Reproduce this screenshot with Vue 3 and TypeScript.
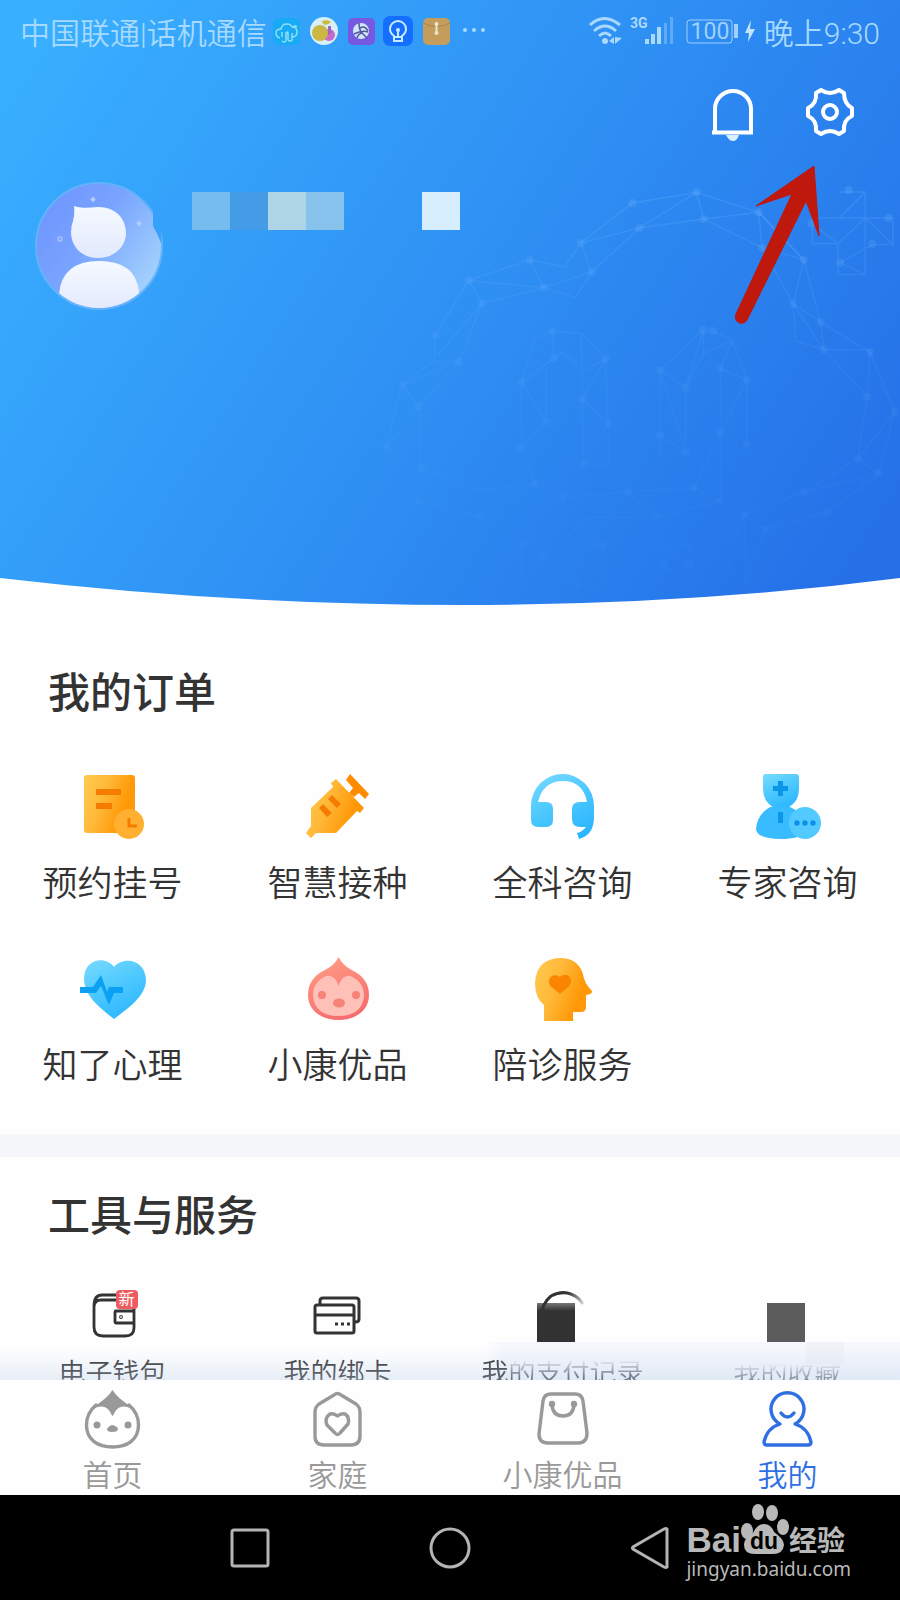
<script setup lang="ts">
interface Entry {
  id: string
  label: string
}

const orders: Entry[] = [
  { id: 'register', label: '预约挂号' },
  { id: 'vaccine', label: '智慧接种' },
  { id: 'general', label: '全科咨询' },
  { id: 'expert', label: '专家咨询' },
  { id: 'mind', label: '知了心理' },
  { id: 'goods', label: '小康优品' },
  { id: 'escort', label: '陪诊服务' },
]

const tools: Entry[] = [
  { id: 'wallet', label: '电子钱包' },
  { id: 'cards', label: '我的绑卡' },
  { id: 'payments', label: '我的支付记录' },
  { id: 'favorites', label: '我的收藏' },
]

const tabs: Entry[] = [
  { id: 'home', label: '首页' },
  { id: 'family', label: '家庭' },
  { id: 'shop', label: '小康优品' },
  { id: 'me', label: '我的' },
]

const activeTab = 'me'

type Point = [number, number]

const nodes: Point[] = [
  [776, 189], [966, 157], [987, 237], [797, 264], [624, 309], [1150, 217], [1160, 323], [656, 396],
  [473, 360], [514, 443], [292, 421], [331, 490], [192, 586], [263, 665], [95, 735], [144, 799],
  [48, 921], [1283, 359], [1252, 492], [1333, 546], [1343, 629], [1480, 637], [1471, 770], [1552, 815],
  [1443, 956], [1505, 1000], [1416, 150], [1534, 234], [1486, 311], [1391, 368], [1306, 250], [539, 573],
  [545, 655], [697, 656], [448, 728], [628, 778], [522, 845], [705, 850], [986, 570], [1015, 573],
  [858, 691], [1037, 685], [1115, 719], [934, 743], [858, 886], [1037, 880], [1115, 915], [934, 938],
  [631, 971], [446, 925], [152, 984], [488, 1032], [568, 1073], [762, 1056], [957, 1043], [848, 1132],
  [1033, 1084], [1284, 1056], [1106, 1124], [1170, 1167], [1354, 1116], [446, 1213], [511, 1249],
  [690, 1217], [870, 1276], [948, 1276], [610, 1332], [144, 1083], [328, 1132],
]
</script>

<template>
  <div class="phone">
    <header class="hero">
      <svg class="hero-bg" viewBox="0 0 900 606" preserveAspectRatio="none" aria-hidden="true">
        <defs>
          <linearGradient id="sky" gradientUnits="userSpaceOnUse" x1="0" y1="60" x2="850" y2="610">
            <stop offset="0" stop-color="#39b0ff" />
            <stop offset=".5" stop-color="#2f91f4" />
            <stop offset="1" stop-color="#256fe7" />
          </linearGradient>
          <linearGradient id="fade" gradientUnits="userSpaceOnUse" x1="0" y1="100" x2="0" y2="1350">
            <stop offset="0" stop-color="#6fb4ff" stop-opacity=".26" />
            <stop offset=".5" stop-color="#62a8ff" stop-opacity=".12" />
            <stop offset="1" stop-color="#62a8ff" stop-opacity=".04" />
          </linearGradient>
        </defs>
        <path fill="url(#sky)" d="M0 0H900V578Q690 605 465 605Q230 605 0 578Z" />
        <g transform="translate(370 140) scale(.338 .3333)" fill="url(#fade)">
          <g fill="none" stroke="url(#fade)" stroke-width="4">
            <path d="M292 421 473 360 576 381 624 309 776 189 966 157 1150 217 1283 359 1333 546 1480 637 1552 815 1505 1000 1354 1116 1170 1167 1106 1340" />
            <path d="M292 421 192 586 190 661 95 735 48 921M292 421 331 490 514 443 608 472 656 396 797 264 987 237 1160 323 1252 492 1343 629 1471 770 1443 956 1284 1056 1106 1124 1050 1305" />
            <path d="M292 421 514 443 473 360M514 443 656 396 624 309 797 264 966 157 987 237 1150 217 1160 323 1283 359 1252 492 1333 546 1343 629H1480L1471 770M1252 492 1260 603 1343 629M1150 217 1283 359M331 490 200 645M331 490 263 665H190M263 665 95 735 144 799 48 921M263 665 144 799 152 984M1552 815 1443 956 1505 1000 1284 1056M1106 1124 1170 1167M1106 1124 1115 1340" />
            <path d="M1390 156H1465V404H1385V311H1309V234H1547V314H1486L1391 368 1465 404M1465 156 1390 232M1465 234 1385 311 1320 260M1465 234 1547 314" />
            <path d="M448 925V728L487 599 539 573 625 580 697 656 705 850V977L631 971 625 580M539 573 545 655 448 728 522 845 446 925M522 845V680M545 655 570 638 635 690 697 656 628 778 705 850 631 971" />
            <path d="M986 570 858 691V960M1015 573 1073 603 1115 719V915M858 691 934 743 987 570V640L1073 603 1037 685 1115 719 1037 880 957 1043M858 691 934 938 858 886M934 938V743L987 640M1037 685V1084" />
            <path d="M152 984 328 1052 488 1032 446 925M144 1083 328 1132 488 1032M568 1073 762 1056 957 1043 1033 1084 848 1132 762 1056M848 1132H650L446 1213 511 1249 650 1132M446 1213V1340L511 1249V1340M610 1213H690V1340H610ZM870 1213H948V1276L870 1213V1276L948 1340" />
          </g>
          <circle v-for="(n, i) in nodes" :key="i" :cx="n[0]" :cy="n[1]" r="12" />
        </g>
      </svg>

      <div class="status">
        <span class="carrier">中国联通|话机通信</span>
        <svg class="apps" viewBox="0 0 218 32" aria-hidden="true">
          <rect x="1" y="3" width="27" height="27" rx="6" fill="#18aaf5" />
          <path d="M8 23q-4-1-4-5t5-4q1-5 6-5 4 0 5 3 5 0 5 5t-5 5M10 22v-5m4 9v-8q2-2 2 0v7m-6 1q2 2 4 0m2-1q2 2 4 0v-7m3-8v3m-2-1.500h4" fill="none" stroke="#8ee0f2" stroke-width="1.500" />
          <circle cx="52" cy="16" r="14" fill="#d8eff6" />
          <path d="M50 6q6-2 9 1-4 4-8 2z" fill="#c9bb3b" />
          <circle cx="57" cy="20" r="6" fill="#c86ac9" />
          <circle cx="48" cy="18" r="8" fill="#ccb743" />
          <path d="M56 20V11h3v7z" fill="#9a67c9" />
          <rect x="76" y="3" width="27" height="27" rx="5" fill="#7658e1" />
          <circle cx="89" cy="16" r="8" fill="#cfe8f7" />
          <path d="M87 8q0 7 3 10l5 5M82 19q8-4 14-2M90 18q-4 1-5 5M88 13q5-3 8 3" fill="none" stroke="#53569d" stroke-width="1.500" />
          <rect x="111" y="1" width="30" height="30" rx="7" fill="#146eff" />
          <path d="M122 21q-4-3-4-7a8 8 0 0 1 16 0q0 4-4 7v5h-8zm0 1h8m-4-1v-6" fill="none" stroke="#c8ecff" stroke-width="2" />
          <circle cx="126" cy="15" r="2" fill="#c8ecff" />
          <rect x="151" y="3" width="27" height="27" rx="5" fill="#c49c5c" />
          <path d="M151 8q13 7 27 0" fill="none" stroke="#a98650" />
          <path d="M164.500 9v9" stroke="#e9e5cd" stroke-width="2" />
          <circle cx="164.500" cy="9" r="2" fill="#e9e5cd" />
          <circle cx="164.500" cy="18" r="2" fill="#e9e5cd" />
          <circle v-for="x in [193, 202, 211]" :key="x" :cx="x" cy="15" r="2" fill="#a8dcff" />
        </svg>
        <span class="grow"></span>
        <svg class="signals" viewBox="0 0 170 32" aria-hidden="true">
          <g fill="none" stroke="#abd9fd" stroke-width="3">
            <path d="M2 10q14-13 30 0M6 16q11-10 22 0M11 21q6-6 12 0" />
          </g>
          <circle cx="17" cy="26" r="3" fill="#abd9fd" />
          <path d="M21 26l5-4v7zm6-4v7l7-6z" fill="#abd9fd" />
          <text x="42" y="13" class="net">3G</text>
          <path d="M57 24h4v5h-4zM63 19h4v10h-4zM69 12h4v17h-4z" fill="#abd9fd" />
          <path d="M76 8h3v21h-3zM82 2h3v27h-3z" fill="#5fabf7" />
          <rect x="99" y="5" width="45" height="23" rx="3" fill="none" stroke="#9fd0fb" />
          <path d="M146 9h4v14h-4z" fill="#9fd0fb" />
          <text x="122" y="24" class="level">100</text>
          <path d="M163 5l-6 13h4l-1 9 7-13h-5z" fill="#c3e4ff" />
        </svg>
        <span class="clock">晚上9:30</span>
      </div>

      <div class="actions">
        <button type="button" aria-label="消息">
          <svg viewBox="0 0 56 56" aria-hidden="true">
            <path d="M11 48V25a18 18 0 0 1 36 0v23M8 48.500h41" fill="none" stroke="#fff" stroke-width="4" />
            <path d="M22 51h13q-2 6-6 6t-7-6z" fill="#d9efff" />
          </svg>
        </button>
        <button type="button" aria-label="设置">
          <svg viewBox="0 0 56 56" aria-hidden="true">
            <path d="M14 9 19 6Q28 12 37 6L42 9Q42 20 50 24V32Q41 36 42 47L37 50Q28 44 19 50L14 47Q15 36 6 32V24Q15 20 14 9Z" fill="none" stroke="#fff" stroke-width="4" stroke-linejoin="round" />
            <circle cx="28" cy="28" r="7" fill="none" stroke="#fff" stroke-width="4" />
          </svg>
        </button>
      </div>

      <div class="profile">
        <svg class="avatar" viewBox="0 0 128 128" role="img" aria-label="头像">
          <defs>
            <linearGradient id="av" x1="0" y1=".1" x2="1" y2=".8">
              <stop offset="0" stop-color="#6f93ff" />
              <stop offset=".45" stop-color="#78a4fe" />
              <stop offset="1" stop-color="#a9d7fd" />
            </linearGradient>
            <linearGradient id="avw" x1="0" y1="0" x2="0" y2="1">
              <stop offset="0" stop-color="#f5f9ff" />
              <stop offset="1" stop-color="#e1e9fd" />
            </linearGradient>
            <clipPath id="avc"><circle cx="64" cy="64" r="62" /></clipPath>
          </defs>
          <circle cx="64" cy="64" r="63" fill="url(#av)" stroke="#64b2fb" stroke-width="2" />
          <path d="M118 12V44q5 8 8 17L127 30z" fill="#36a1fa" />
          <g clip-path="url(#avc)" fill="url(#avw)">
            <path d="M39 24q8 3 24 1c18 0 28 12 28 26S79 76 63 76 36 65 36 50q0-6 2-11 2-7 1-15z" />
            <path d="M24 112q3-33 40-33t40 31v20H24z" />
          </g>
          <path d="M58 15v5m-2.500-2.500h5M104 39v5m-2.500-2.500h5" stroke="#b4ceff" stroke-width="2" />
          <circle cx="25" cy="57" r="2" fill="none" stroke="#9cbaff" stroke-width="2" />
        </svg>
        <div class="mosaic" aria-hidden="true">
          <i class="m1"></i><i class="m2"></i><i class="m3"></i><i class="m4"></i><i></i><i></i><i class="m7"></i>
        </div>
      </div>

      <svg class="pointer" viewBox="0 0 90 160" aria-hidden="true">
        <path d="M79 0 21 40 57 28 1 148A6 6 0 0 0 12 154L71 35 84 70Z" fill="#bf180c" stroke="#bf180c" stroke-linejoin="round" />
      </svg>
    </header>

    <main class="content">
      <section class="orders">
        <h2>我的订单</h2>
        <nav class="grid">
          <a v-for="o in orders" :key="o.id" class="order" href="#">
            <svg viewBox="0 0 72 72" aria-hidden="true">
              <defs>
                <linearGradient :id="o.id + 'o'" x1="0" y1=".3" x2="1" y2=".7">
                  <stop offset="0" stop-color="#ffc74c" />
                  <stop offset=".35" stop-color="#ffb838" />
                  <stop offset=".8" stop-color="#ff9705" />
                  <stop offset="1" stop-color="#ff9b12" />
                </linearGradient>
                <linearGradient :id="o.id + 'b'" x1=".2" y1="0" x2=".7" y2="1">
                  <stop offset="0" stop-color="#72d8ff" />
                  <stop offset=".5" stop-color="#4bc7fe" />
                  <stop offset="1" stop-color="#2bb6ff" />
                </linearGradient>
                <linearGradient :id="o.id + 'r'" x1=".3" y1="0" x2=".7" y2="1">
                  <stop offset="0" stop-color="#ff9b85" />
                  <stop offset="1" stop-color="#f46a6c" />
                </linearGradient>
              </defs>
              <template v-if="o.id === 'register'">
                <rect x="7" y="4" width="51" height="58" rx="3" :fill="`url(#${o.id}o)`" />
                <path d="M19 18h25v6H19zM19 32h16v6H19z" fill="#f57c00" />
                <circle cx="52" cy="53" r="15" fill="#ffb030" />
                <path d="M52 47v8h8" fill="none" stroke="#f57c00" stroke-width="3" />
              </template>
              <template v-else-if="o.id === 'vaccine'">
                <path d="M48 3 67 23 63 28 57 22 52 26 47 22 51 17 44 9z" fill="#ff8b00" />
                <path d="M34 8 29 12 31 16 9 37V55L4 62 9 67 14 62H34L55 40 58 42 62 37z" :fill="`url(#${o.id}o)`" />
                <path d="M26 28 30 24 39 33 35 37zM17 37 21 33 30 42 25 46z" fill="#f57c00" />
              </template>
              <template v-else-if="o.id === 'general'">
                <path d="M4 35a31.500 32 0 0 1 63 0V46q0 18-15 22l-2-6q5-1 9-6h-6q-8 0-8-8V38q0-7 8-7h7q-4-21-24-21T11 31h8q7 0 7 7v11q0 7-7 7h-8q-7 0-7-7z" :fill="`url(#${o.id}b)`" />
              </template>
              <template v-else-if="o.id === 'expert'">
                <path d="M15 38q6-4 14-4 23 2 23 27-3 7-24 7-24-1-24-10 1-13 11-20z" fill="#39bcff" />
                <path d="M14 3h30q3 0 3 3v12q0 12-10 18h-16Q11 30 11 18V6q0-3 3-3z" :fill="`url(#${o.id}b)`" />
                <path d="M26 10h5v5h5v5h-5v5h-5v-5h-5v-5h5zM26 41h5v11h-5z" fill="#0b96ea" />
                <circle cx="53" cy="52" r="16" fill="#53caff" />
                <circle v-for="x in [45, 53, 61]" :key="x" :cx="x" cy="52" r="2.700" fill="#0b8fe6" />
              </template>
              <template v-else-if="o.id === 'mind'">
                <path d="M37 14C46 3 69 6 69 28 68 44 50 56 37 66 22 54 7 43 7 25 8 5 29 3 37 14z" :fill="`url(#${o.id}b)`" />
                <path d="M3 34h13l8-12 6 17 2-5h14v6H37l-5 12-8-19-5 7H3z" fill="#0aa1f5" />
              </template>
              <template v-else-if="o.id === 'goods'">
                <path d="M36.500 4q4 8 13 13Q67 25 67 42C67 58 53 67 36.500 67S6 58 6 42Q6 25 23 17q10-5 13.500-13z" :fill="`url(#${o.id}r)`" />
                <path d="M36.500 33q4-12 12-10Q62 29 62 43 60 63 36.500 63T11 43Q11 29 24 23q9-2 12.500 10z" fill="#ffc0b8" />
                <g fill="#f58378">
                  <ellipse cx="20" cy="42" rx="4" ry="4" />
                  <ellipse cx="54" cy="42" rx="4" ry="4" />
                  <ellipse cx="37" cy="50" rx="6" ry="4.500" />
                </g>
              </template>
              <template v-else>
                <path d="M17 68V52Q8 45 8 30 9 6 33 5 51 5 56 21 57 30 65 38 66 41 59 42V54Q59 59 54 59H46V68z" :fill="`url(#${o.id}o)`" />
                <path d="M33 24c5-5 12-1 11 5-1 5-7 8-11 12-4-4-11-7-11-12 0-6 6-9 11-5z" fill="#fb8500" />
              </template>
            </svg>
            <span>{{ o.label }}</span>
          </a>
        </nav>
      </section>

      <section class="tools">
        <h2>工具与服务</h2>
        <nav class="grid">
          <a v-for="t in tools" :key="t.id" class="tool" :class="t.id" href="#">
            <span class="tool-icon">
              <svg viewBox="0 0 60 60" aria-hidden="true">
                <g v-if="t.id === 'wallet'" fill="none" stroke="#333" stroke-width="2.800">
                  <path d="M51 26V16H18q-7 0-7 7v20q0 9 9 9h22q9 0 9-8V40M34 11H19q-8 0-8 11" />
                  <path d="M51 27H33q-1 0-1 1v10q0 1 1 1h18z" />
                  <circle cx="38" cy="33" r=".5" />
                </g>
                <g v-else-if="t.id === 'cards'" fill="none" stroke="#333" stroke-width="3">
                  <path d="M12 20v-3q0-3 3-3h33q3 0 3 3v18q0 3-4 3" />
                  <rect x="7" y="21" width="39" height="28" rx="2" />
                  <path d="M7 31h39" />
                  <path d="M27 40h3m3 0h3m3 0h3" />
                </g>
                <g v-else-if="t.id === 'payments'">
                  <defs>
                    <linearGradient id="bagtop" x1="0" y1="0" x2="0" y2="1">
                      <stop offset="0" stop-color="#777" />
                      <stop offset=".2" stop-color="#323232" />
                    </linearGradient>
                    <linearGradient id="bagarc" gradientUnits="userSpaceOnUse" x1="36" y1="8" x2="51" y2="22">
                      <stop offset="0" stop-color="#333" />
                      <stop offset="1" stop-color="#333" stop-opacity=".1" />
                    </linearGradient>
                  </defs>
                  <path d="M4 19h38v39H4z" fill="url(#bagtop)" />
                  <path d="M8 35Q8 20 18 12 33 4 46 15L50 20" fill="none" stroke="url(#bagarc)" stroke-width="3" />
                </g>
                <path v-else d="M9 19h38v39H9z" fill="#5c5c5c" />
              </svg>
              <em v-if="t.id === 'wallet'">新</em>
            </span>
            <span class="tool-label">{{ t.label }}</span>
          </a>
        </nav>
      </section>
    </main>

    <nav class="tabs">
      <a v-for="t in tabs" :key="t.id" href="#" :class="{ on: t.id === activeTab }">
        <svg viewBox="0 0 64 64" fill="none" stroke="currentColor" stroke-width="3.400" stroke-linejoin="round" stroke-linecap="round" aria-hidden="true">
          <template v-if="t.id === 'home'">
            <path d="M15 18Q5.500 26 5.500 38C5.500 53 17 60 31.500 60S57.500 53 57.500 38Q57.500 26 48 18" />
            <path d="M31.500 4Q35 11 51 21 37 14 31.500 28 26 14 12 21 28 11 31.500 4z" fill="currentColor" stroke-width="1.500" />
            <g fill="currentColor" stroke="none">
              <circle cx="16" cy="38" r="3.500" />
              <circle cx="47" cy="38" r="3.500" />
              <path d="M26 42q1-2 3-3 2-2 5 0 3 1 3 3 0 3-6 3-5 0-5-3z" />
            </g>
          </template>
          <template v-else-if="t.id === 'family'">
            <path d="M28 8Q31.500 5 35 8L50 17Q54 20 54 25V49Q54 58 45 58H18Q9 58 9 49V25Q9 20 13 17z" />
            <path d="M31.500 29Q35 26 39 27 44 30 42 37L34 46Q31.500 49 29 46L21 38Q18 31 24 27 28 26 31.500 29z" />
          </template>
          <template v-else-if="t.id === 'shop'">
            <path d="M20 7H44Q51 7 52 14L56 46Q56 56 47 56H17Q8 56 8 47L12 14Q13 7 20 7z" />
            <path d="M21 18Q22 29 32 29T43 18" />
            <circle cx="21" cy="17" r="1.500" />
            <circle cx="43" cy="17" r="1.500" />
          </template>
          <template v-else>
            <path d="M24 37A16.500 16.500 0 1 1 39 37Q52 41 55 55 55 58 52 58H11Q8 58 8 55 11 41 24 37z" />
            <path d="M25 26Q31.500 34 38 26" />
          </template>
        </svg>
        <span>{{ t.label }}</span>
      </a>
    </nav>

    <footer class="system">
      <button type="button" aria-label="最近任务">
        <svg viewBox="0 0 48 48"><rect x="6" y="6" width="36" height="36" rx="2" /></svg>
      </button>
      <button type="button" aria-label="主屏幕">
        <svg viewBox="0 0 48 48"><circle cx="24" cy="24" r="19" /></svg>
      </button>
      <button type="button" aria-label="返回">
        <svg viewBox="0 0 48 48"><path d="M41 5V43Q40 44 38 43L7 25Q6 24 7 23L38 5Q40 4 41 5z" /></svg>
      </button>
      <div class="mark">
        <div class="mark-row">
          <b>Bai</b>
          <svg viewBox="0 0 48 52" aria-hidden="true">
            <ellipse cx="6" cy="28" rx="6" ry="8" />
            <ellipse cx="17" cy="9" rx="6" ry="8" />
            <ellipse cx="31" cy="10" rx="6" ry="8" />
            <ellipse cx="42" cy="24" rx="6" ry="8" />
            <path d="M23 21q7 0 10 8 10 7 10 13-1 9-11 9H14Q3 51 3 42q0-7 9-12 4-9 11-9z" />
            <text x="23" y="46">du</text>
          </svg>
          <strong>经验</strong>
        </div>
        <span>jingyan.baidu.com</span>
      </div>
    </footer>
  </div>
</template>

<style>
body {
  margin: 0;
  background: #fff;
}
</style>

<style scoped>
.phone {
  display: flex;
  flex-direction: column;
  height: 100vh;
  overflow: hidden;
  background: #fefefe;
  color: #333;
  font-family: Roboto, "Noto Sans CJK SC", sans-serif;
}

a {
  color: inherit;
  text-decoration: none;
}

button {
  display: block;
  padding: 0;
  border: 0;
  background: none;
}

svg {
  display: block;
}

.hero {
  position: relative;
  flex: none;
  padding-bottom: 296px;
}

.hero-bg {
  position: absolute;
  inset: 0;
  width: 100%;
  height: 100%;
}

.status {
  position: relative;
  display: flex;
  align-items: center;
  height: 62px;
  padding: 0 20px;
  color: #a6dafe;
  font-size: 30px;
  font-weight: 350;
  white-space: nowrap;
}

.apps {
  width: 218px;
  height: 32px;
  margin-left: 5px;
}

.grow {
  flex: 1;
}

.signals {
  width: 170px;
  height: 32px;
  margin-right: 6px;
}

.net {
  fill: #abd9fd;
  font-size: 14px;
  font-weight: 700;
}

.level {
  fill: #9fd0fb;
  font-size: 23px;
  font-weight: 400;
  text-anchor: middle;
}

.actions {
  position: relative;
  display: flex;
  justify-content: flex-end;
  gap: 42px;
  padding: 22px 42px 0 0;
}

.actions svg {
  width: 56px;
  height: 56px;
  overflow: visible;
}

.profile {
  position: relative;
  display: flex;
  gap: 29px;
  padding: 42px 35px 0;
}

.avatar {
  width: 128px;
  height: 128px;
}

.mosaic {
  display: flex;
  margin-top: 10px;
}

.mosaic i {
  width: 38px;
  height: 38px;
}

.mosaic .m1 { background: #77bcee; }
.mosaic .m2 { background: #459ce6; }
.mosaic .m3 { background: #aed5e6; }
.mosaic .m4 { background: #86c2ec; }
.mosaic .m7 { margin-left: 2px; background: #d5edfc; }

.pointer {
  position: absolute;
  top: 166px;
  right: 75px;
  width: 90px;
  height: 160px;
}

.content {
  flex: 1;
  min-height: 0;
  overflow: hidden;
}

h2 {
  margin: 0;
  padding-left: 48px;
  font-size: 42px;
  font-weight: 500;
  line-height: 60px;
}

.grid {
  display: grid;
  grid-template-columns: repeat(4, 1fr);
}

.orders {
  padding: 58px 0 37px;
  border-bottom: 23px solid #f6f7fb;
}

.orders .grid {
  row-gap: 38px;
  padding-top: 47px;
}

.order {
  display: flex;
  flex-direction: column;
  align-items: center;
  gap: 12px;
  font-size: 35px;
  font-weight: 350;
  line-height: 60px;
}

.order svg {
  width: 72px;
  height: 72px;
}

.tools {
  padding-top: 30px;
}

.tools .grid {
  padding-top: 37px;
}

.tool {
  position: relative;
  display: flex;
  flex-direction: column;
  align-items: center;
  gap: 10px;
  font-size: 27px;
  font-weight: 350;
  line-height: 40px;
}

.tool-icon {
  position: relative;
  z-index: 1;
}

.tool-icon svg {
  width: 60px;
  height: 60px;
}

.tool-icon em {
  position: absolute;
  top: 6px;
  left: 33px;
  width: 22px;
  border-radius: 4px;
  background: #ef5a60;
  color: #fff;
  font-size: 16px;
  font-style: normal;
  font-weight: 400;
  line-height: 19px;
  text-align: center;
}

.payments .tool-label {
  background:
    linear-gradient(90deg, #333 24px, transparent 30px),
    linear-gradient(#f4f7fc 15%, #444a53 60%);
  background-clip: text;
  color: transparent;
}

.favorites .tool-label {
  background: linear-gradient(#f4f7fc 25%, #666b73 65%);
  background-clip: text;
  color: transparent;
}

.payments::before,
.favorites::before {
  content: "";
  position: absolute;
  inset: 58px 0 0;
  background: #f4f7fc;
}

.payments::before {
  left: 16%;
  background: linear-gradient(90deg, #f4f7fc00, #f4f7fc 8%);
}

.favorites::after {
  content: "";
  position: absolute;
  top: 58px;
  left: 58%;
  width: 38px;
  height: 22px;
  background: #eff2f7;
}

.tool-label {
  position: relative;
}

.tabs {
  position: relative;
  display: grid;
  flex: none;
  grid-template-columns: repeat(4, 1fr);
  padding: 7px 0 0;
  background: #fefefe;
  color: #999;
  font-size: 30px;
  font-weight: 350;
  line-height: 38px;
}

.tabs::before {
  content: "";
  position: absolute;
  right: 0;
  bottom: 100%;
  left: 0;
  height: 32px;
  background: linear-gradient(rgba(190, 208, 235, 0), rgba(190, 208, 235, .36));
}

.tabs a {
  display: flex;
  flex-direction: column;
  align-items: center;
  gap: 6px;
}

.tabs svg {
  width: 64px;
  height: 64px;
}

.tabs .on {
  color: #2f6fe4;
}

.system {
  position: relative;
  display: flex;
  flex: none;
  align-items: center;
  justify-content: center;
  gap: 152px;
  height: 105px;
  background: #000;
}

.system button svg {
  width: 48px;
  height: 48px;
  fill: none;
  stroke: #b4b4b4;
  stroke-width: 3;
}

.mark {
  position: absolute;
  top: 8px;
  right: 49px;
  color: #b9b9b9;
  font-family: "Noto Sans", "Noto Sans CJK SC", sans-serif;
  font-size: 19px;
  line-height: 28px;
}

.mark-row {
  display: flex;
  align-items: flex-end;
  height: 52px;
}

.mark-row b {
  font-family: "Liberation Sans", Arial, sans-serif;
  font-size: 35px;
  line-height: 30px;
}

.mark-row strong {
  font-size: 28px;
  font-weight: 700;
  line-height: 30px;
}

.mark-row svg {
  width: 48px;
  height: 52px;
  fill: #b9b9b9;
}

.mark-row text {
  fill: #000;
  font-family: "Liberation Sans", Arial, sans-serif;
  font-size: 23px;
  font-weight: 700;
  text-anchor: middle;
}
</style>
